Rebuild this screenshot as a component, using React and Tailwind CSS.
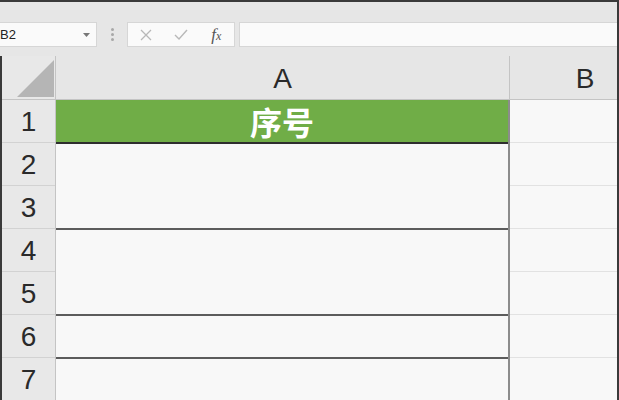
import React from "react";

const rowNums = [1, 2, 3, 4, 5, 6, 7];

// merged blocks in column A, heights in px
const blocks = [86, 86, 43, 43];

const App = () => {
  return (
    <div
      className="w-[619px] h-[400px] overflow-hidden bg-[#e6e6e6] flex flex-col"
      style={{ fontFamily: '"Liberation Sans", Arial, sans-serif' }}
    >
      {/* top strip */}
      <div className="h-[2px] bg-[#3a3a3a] shrink-0"></div>

      {/* FORMULA BAR */}
      <div className="h-[54px] shrink-0 flex items-start pt-[20px] border-r-2 border-[#3a3a3a]">
        {/* name box */}
        <div className="w-[97px] h-[25px] bg-[#fafafa] border border-l-0 border-[#d6d6d6] flex items-center justify-between pr-[6px] overflow-hidden">
          <span className="text-[13px] text-[#222]">B2</span>
          <svg width="7" height="4" viewBox="0 0 7 4">
            <path d="M0 0 L7 0 L3.5 4 Z" fill="#777" />
          </svg>
        </div>

        {/* dots */}
        <div className="w-[30px] h-[25px] flex flex-col items-center justify-center gap-[2px]">
          <span className="w-[3px] h-[3px] rounded-full bg-[#a8a8a8]"></span>
          <span className="w-[3px] h-[3px] rounded-full bg-[#a8a8a8]"></span>
          <span className="w-[3px] h-[3px] rounded-full bg-[#a8a8a8]"></span>
        </div>

        {/* cancel / enter / fx */}
        <div className="w-[108px] h-[25px] bg-[#fafafa] border border-[#d6d6d6] flex items-center">
          <div className="w-[36px] flex justify-center">
            <svg width="12" height="12" viewBox="0 0 12 12">
              <path d="M1 1 L11 11 M11 1 L1 11" stroke="#b8b8b8" strokeWidth="1.3" fill="none" />
            </svg>
          </div>
          <div className="w-[36px] flex justify-center">
            <svg width="14" height="11" viewBox="0 0 14 11">
              <path d="M1 6 L5 10 L13 1" stroke="#b8b8b8" strokeWidth="1.4" fill="none" />
            </svg>
          </div>
          <div className="w-[36px] flex justify-center">
            <span
              className="text-[17px] italic text-[#555] leading-none"
              style={{ fontFamily: '"Liberation Serif", serif' }}
            >
              f<span className="text-[12px]">x</span>
            </span>
          </div>
        </div>

        {/* formula input */}
        <div className="flex-1 ml-[4px] h-[25px] bg-[#fafafa] border border-r-0 border-[#d6d6d6]"></div>
      </div>

      {/* GRID */}
      <div className="flex-1 flex border-l-2 border-r-2 border-[#3a3a3a] overflow-hidden">
        {/* row headers */}
        <div className="w-[54px] shrink-0 flex flex-col bg-[#e8e8e8] border-r border-[#c4c4c4]">
          <div className="h-[44px] shrink-0 border-b border-[#c4c4c4] flex items-end justify-end pr-[1px] pb-[2px]">
            <svg width="37" height="37" viewBox="0 0 37 37">
              <path d="M37 0 L37 37 L0 37 Z" fill="#b5b5b5" />
            </svg>
          </div>
          {rowNums.map((n) => (
            <div
              key={n}
              className="h-[43px] shrink-0 border-b border-[#d2d2d2] flex items-center justify-center pt-[2px] text-[28px] text-[#2a2a2a] font-light"
            >
              {n}
            </div>
          ))}
        </div>

        {/* column A */}
        <div className="w-[454px] shrink-0 flex flex-col">
          <div className="h-[44px] shrink-0 bg-[#e6e6e6] border-b border-r border-[#c4c4c4] flex items-center justify-center pt-[2px] text-[28px] text-[#2a2a2a]">
            A
          </div>
          <div className="border-r-2 border-[#8c8c8c] flex flex-col flex-1">
            <div
              className="h-[44px] shrink-0 bg-[#70ad47] border-b-2 border-[#2e2e2e] flex items-center justify-center text-[32px] font-bold text-white"
              style={{ fontFamily: '"Noto Sans CJK SC", sans-serif' }}
            >
              序号
            </div>
            {blocks.map((h, i) => (
              <div
                key={i}
                className={`shrink-0 bg-[#f8f8f8] border-b-2 border-[#5c5c5c] ${h === 86 ? "h-[86px]" : "h-[43px]"}`}
              ></div>
            ))}
            <div className="flex-1 bg-[#f8f8f8]"></div>
          </div>
        </div>

        {/* column B */}
        <div className="w-[150px] shrink-0 flex flex-col">
          <div className="h-[44px] shrink-0 bg-[#e6e6e6] border-b border-[#c4c4c4] flex items-center justify-center pt-[2px] text-[28px] text-[#2a2a2a]">
            B
          </div>
          {rowNums.map((n) => (
            <div key={n} className="h-[43px] shrink-0 bg-[#f8f8f8] border-b border-[#e2e2e2]"></div>
          ))}
        </div>
      </div>
    </div>
  );
};

export default App;
